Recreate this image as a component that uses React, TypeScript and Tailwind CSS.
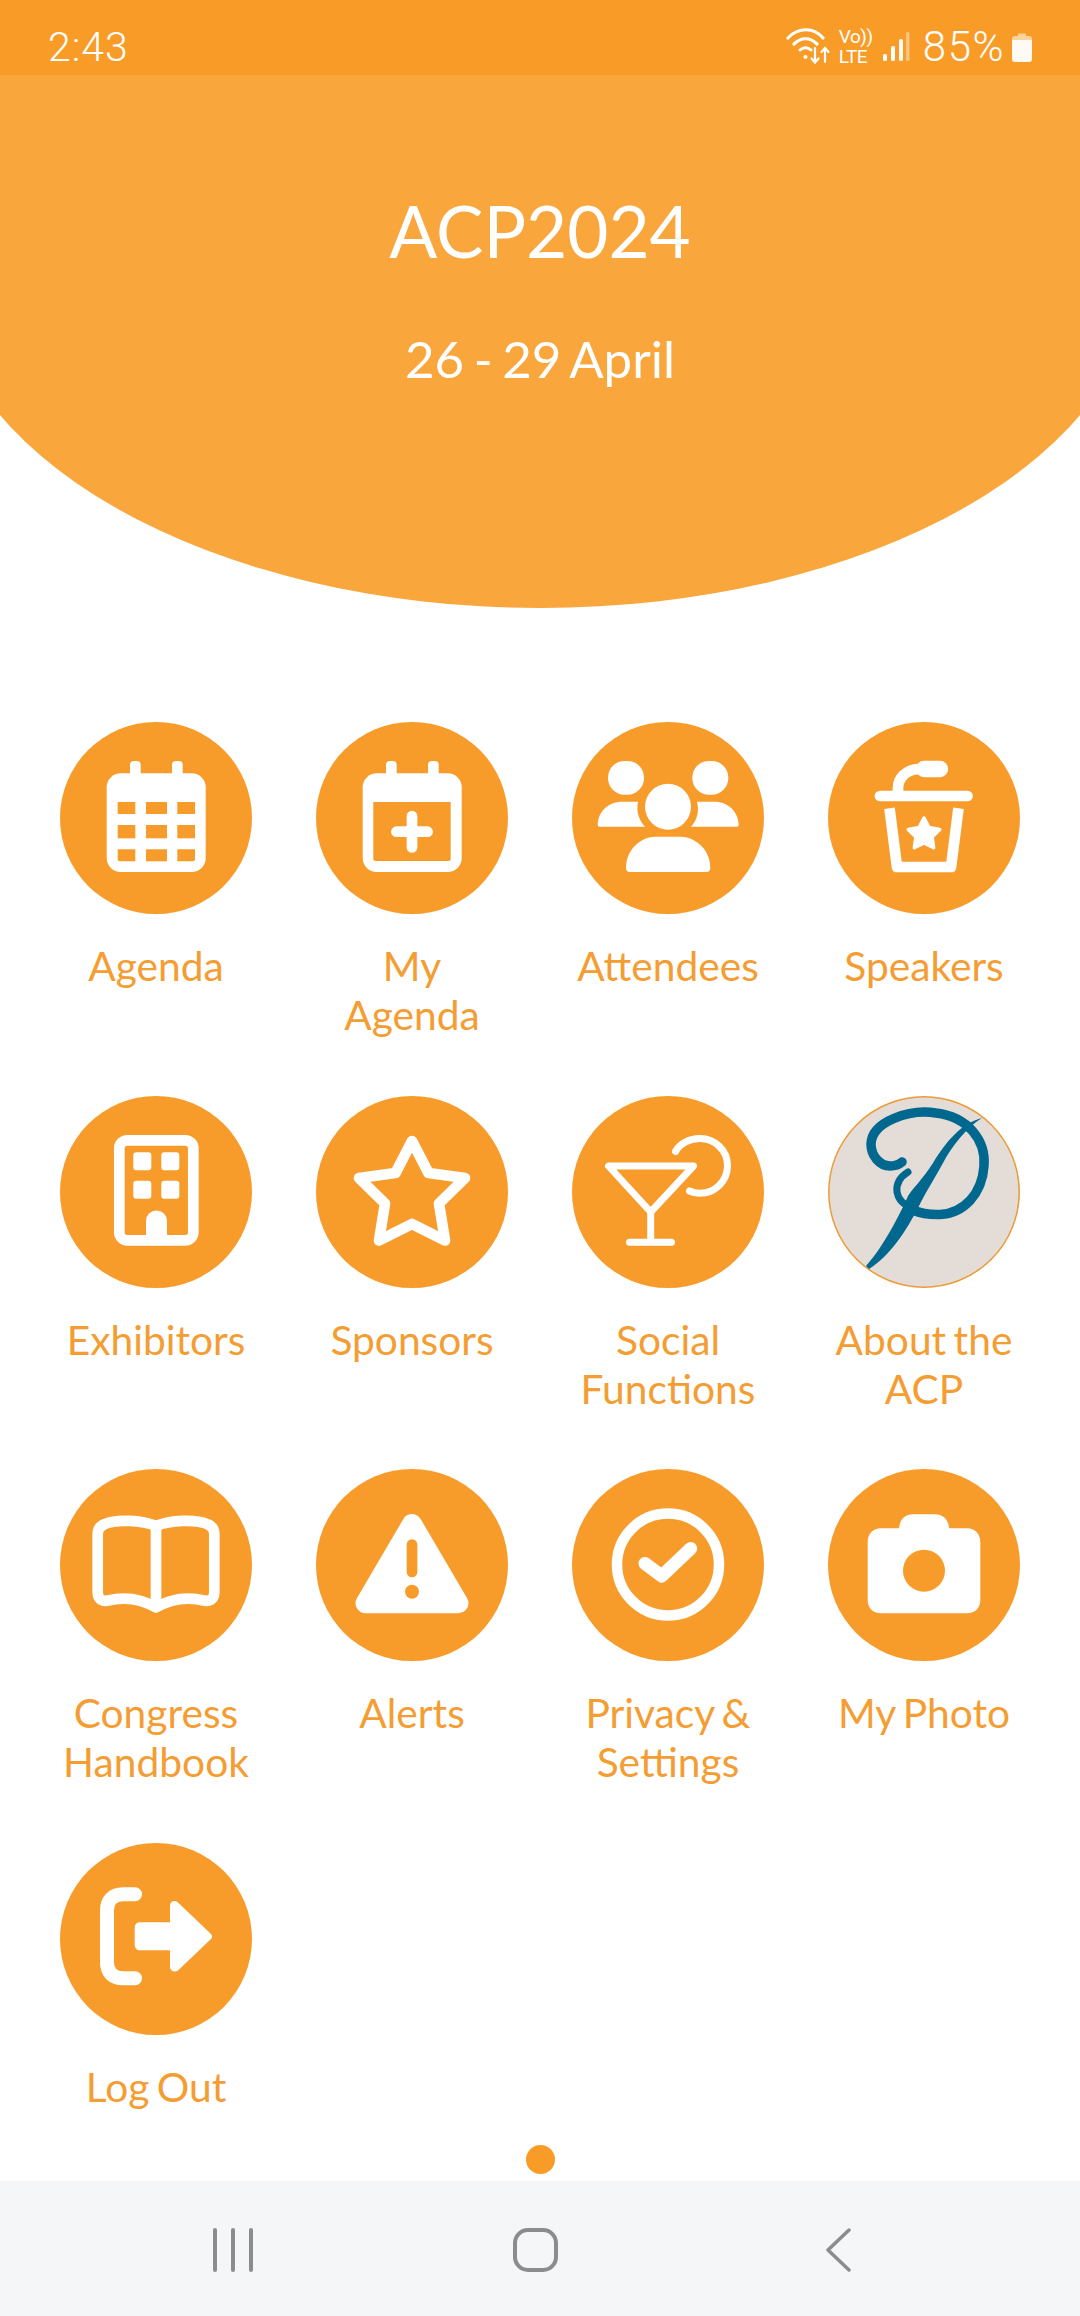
const O = "#f79c2b";

function Calendar({ plus }: { plus?: boolean }) {
  return (
    <svg viewBox="0 0 192 192" className="w-full h-full">
      <rect x="70" y="39" width="10.7" height="30" rx="4" fill="#fff" />
      <rect x="112" y="39" width="10.7" height="30" rx="4" fill="#fff" />
      <rect x="46.7" y="51.3" width="99" height="98.7" rx="14" fill="#fff" />
      {plus ? (
        <>
          <path d="M57.3 80H134.7V137a2 2 0 0 1-2 2H59.3a2 2 0 0 1-2-2Z" fill={O} />
          <path d="M80.4 109.7H111.6M96 94V125.4" stroke="#fff" strokeWidth="10.7" strokeLinecap="round" />
        </>
      ) : (
        <g fill={O}>
          <rect x="57.7" y="80" width="17.6" height="12" />
          <rect x="86" y="80" width="21" height="12" />
          <rect x="117.3" y="80" width="17.7" height="12" />
          <rect x="57.7" y="103" width="17.6" height="13.3" />
          <rect x="86" y="103" width="21" height="13.3" />
          <rect x="117.3" y="103" width="17.7" height="13.3" />
          <path d="M57.7 127.3H75.3V139.3H59.7a2 2 0 0 1-2-2Z" />
          <rect x="86" y="127.3" width="21" height="12" />
          <path d="M117.3 127.3H135V137.3a2 2 0 0 1-2 2H117.3Z" />
        </g>
      )}
    </svg>
  );
}

function Attendees() {
  return (
    <svg viewBox="0 0 192 192" className="w-full h-full">
      <g fill="#fff">
        <rect x="36" y="39" width="36" height="33.7" rx="16.5" />
        <rect x="120.3" y="39" width="36" height="33.7" rx="16.5" />
        <path d="M27.7 104.7a2 2 0 0 1-2-2C26 90 36 79.7 50 79.7H66C64 90 67 98 73 104.7Z" />
        <path d="M164.7 104.7a2 2 0 0 0 2-2C166.4 90 156.4 79.7 142.4 79.7H125C127.5 90 125 98 119 104.7Z" />
        <circle cx="96" cy="84.7" r="23" />
        <path d="M58 150a4 4 0 0 1-4-4C54 128 68 114.7 84 114.7H108C124 114.7 138.3 128 138.3 146a4 4 0 0 1-4 4Z" />
      </g>
    </svg>
  );
}

function starPoints(cx: number, cy: number, R: number, r: number) {
  const p: string[] = [];
  for (let i = 0; i < 10; i++) {
    const a = (-90 + i * 36) * (Math.PI / 180);
    const rad = i % 2 === 0 ? R : r;
    p.push(`${(cx + rad * Math.cos(a)).toFixed(1)},${(cy + rad * Math.sin(a)).toFixed(1)}`);
  }
  return p.join(" ");
}

function Speakers() {
  return (
    <svg viewBox="0 0 192 192" className="w-full h-full">
      <path d="M52 74H139.5" stroke="#fff" strokeWidth="10.7" strokeLinecap="round" />
      <path d="M70 70V66C70 56 78 48 90 47" stroke="#fff" strokeWidth="10.7" fill="none" />
      <path d="M96 47H112" stroke="#fff" strokeWidth="16.3" strokeLinecap="round" />
      <path d="M61.5 86.3L69 145H123L130.5 86.3" stroke="#fff" strokeWidth="10.7" fill="none" strokeLinejoin="round" />
      <polygon points={starPoints(96, 112.5, 16.5, 8.5)} fill="#fff" stroke="#fff" strokeWidth="3.5" strokeLinejoin="round" />
    </svg>
  );
}

function Building() {
  return (
    <svg viewBox="0 0 192 192" className="w-full h-full">
      <rect x="59.3" y="44.3" width="74" height="100" rx="8" fill="none" stroke="#fff" strokeWidth="10.7" />
      <g fill="#fff">
        <rect x="73.3" y="56.3" width="18" height="18" rx="3" />
        <rect x="101.3" y="56.3" width="18" height="18" rx="3" />
        <rect x="73.3" y="84.7" width="18" height="18" rx="3" />
        <rect x="101.3" y="84.7" width="18" height="18" rx="3" />
        <path d="M86 145V125a10.5 10.5 0 0 1 21 0V145Z" />
      </g>
    </svg>
  );
}

function StarOutline() {
  return (
    <svg viewBox="0 0 192 192" className="w-full h-full">
      <path
        d="M96 45L112.5 77L149 82L123 107.5L129 144.5L96 128L63 144.5L69 107.5L43 82L79.5 77Z"
        fill="none"
        stroke="#fff"
        strokeWidth="10.7"
        strokeLinejoin="round"
      />
    </svg>
  );
}

function Cocktail() {
  return (
    <svg viewBox="0 0 192 192" className="w-full h-full">
      <g fill="none" stroke="#fff" strokeWidth="7" strokeLinecap="round" strokeLinejoin="round">
        <path d="M36.5 70H121.5L78.7 116Z" />
        <path d="M78.7 116V146M57.5 146.3H99.5" />
        <path d="M103.5 55.5C108 47 118 42.5 128 42.5C143 42.5 155.5 54.5 155.5 69.5C155.5 85 143 97.3 128 97.3C124 97.3 120.5 96.5 117.5 95" />
      </g>
    </svg>
  );
}

function PLogo() {
  return (
    <svg viewBox="0 0 192 192" className="w-full h-full">
      <circle cx="96" cy="96" r="95.2" fill="#e3dcd7" stroke="#ee9a35" strokeWidth="1.5" />
      <g fill="none" stroke="#00688f" strokeLinecap="round">
        <path
          d="M74 66C70 69.5 66 70 62 70C52 70 43 60 43 48C44 25 82 13 108 17C140 21 158 44 156 70C154 98 136 117 112 118.5C100 119 92 117 84 114"
          strokeWidth="9.5"
        />
        <path d="M80 76C72 81 68 88 69 96C70 101 73 106 78 109" strokeWidth="7" />
      </g>
      <path
        d="M154 22C132 28 118 46 105 67C94 84 85 92 80 100C72 118 56 150 38 170L41 173C62 160 78 135 90 112C100 92 108 80 115 67C124 50 138 32 154 22Z"
        fill="#00688f"
      />
    </svg>
  );
}

function Book() {
  return (
    <svg viewBox="0 0 192 192" className="w-full h-full">
      <path
        d="M96 57C82 51 56 50 45 55C40 57 37.7 60 37.7 65V123C37.7 129 41 132.5 47 131.7C62 128 80 129 96 138.5C112 129 130 128 145 131.7C151 132.5 154.3 129 154.3 123V65C154.3 60 152 57 147 55C136 50 110 51 96 57Z"
        fill="none"
        stroke="#fff"
        strokeWidth="10.7"
        strokeLinejoin="round"
      />
      <path d="M96 57V138" stroke="#fff" strokeWidth="10.7" />
    </svg>
  );
}

function Alert() {
  return (
    <svg viewBox="0 0 192 192" className="w-full h-full">
      <path d="M96 55L49.5 134.3H142.5Z" fill="#fff" stroke="#fff" strokeWidth="20" strokeLinejoin="round" />
      <path d="M96 75.6V103" stroke={O} strokeWidth="10.7" strokeLinecap="round" />
      <circle cx="96" cy="122.7" r="7" fill={O} />
    </svg>
  );
}

function Privacy() {
  return (
    <svg viewBox="0 0 192 192" className="w-full h-full">
      <circle cx="96" cy="95.5" r="51" fill="none" stroke="#fff" strokeWidth="10.5" />
      <path d="M73 94.5L89.7 107L118.7 79.5" fill="none" stroke="#fff" strokeWidth="13" strokeLinecap="round" strokeLinejoin="round" />
    </svg>
  );
}

function Camera() {
  return (
    <svg viewBox="0 0 192 192" className="w-full h-full">
      <path
        d="M53 59.3H71C72 50 77 45.3 85 45.3H107C115 45.3 120 50 121.3 59.3H139C147 59.3 152.3 65 152.3 73V131C152.3 139 147 144.3 139 144.3H53C45 144.3 39.7 139 39.7 131V73C39.7 65 45 59.3 53 59.3Z"
        fill="#fff"
      />
      <circle cx="96" cy="101.7" r="21" fill={O} />
    </svg>
  );
}

function LogOut() {
  return (
    <svg viewBox="0 0 192 192" className="w-full h-full">
      <path d="M75 51.3H63C53 51.3 47 57 47 67V119.5C47 129.5 53 135.3 63 135.3H75" fill="none" stroke="#fff" strokeWidth="14" strokeLinecap="round" />
      <path
        d="M80 79.3H110V63C110 58 115 56.5 118.5 60L151 91C152.5 92.5 152.5 94.5 151 96L118.5 127C115 130 110 128.5 110 123.5V107.3H80C77 107.3 74.7 105 74.7 102V84.5C74.7 81.5 77 79.3 80 79.3Z"
        fill="#fff"
      />
    </svg>
  );
}

const items: { lines: string[]; icon: React.ReactNode; logo?: boolean }[] = [
  { lines: ["Agenda"], icon: <Calendar /> },
  { lines: ["My", "Agenda"], icon: <Calendar plus /> },
  { lines: ["Attendees"], icon: <Attendees /> },
  { lines: ["Speakers"], icon: <Speakers /> },
  { lines: ["Exhibitors"], icon: <Building /> },
  { lines: ["Sponsors"], icon: <StarOutline /> },
  { lines: ["Social", "Functions"], icon: <Cocktail /> },
  { lines: ["About the", "ACP"], icon: <PLogo />, logo: true },
  { lines: ["Congress", "Handbook"], icon: <Book /> },
  { lines: ["Alerts"], icon: <Alert /> },
  { lines: ["Privacy &", "Settings"], icon: <Privacy /> },
  { lines: ["My Photo"], icon: <Camera /> },
  { lines: ["Log Out"], icon: <LogOut /> },
];

function StatusIcons() {
  return (
    <div className="flex items-center">
      <svg width="46" height="42" viewBox="0 0 46 42" fill="none" stroke="#fff" strokeLinecap="round">
        <path d="M2 12C12 1 28 1 37 12" strokeWidth="3.2" />
        <path d="M8 18C15 11 24 11 31 18" strokeWidth="3.2" />
        <path d="M14 24C17 21 22 21 25 24" strokeWidth="3" />
        <circle cx="19.5" cy="31" r="2" fill="#fff" stroke="none" />
        <path d="M29 22V36M25.5 32.5L29 36.5L32.5 32.5" strokeWidth="2.2" />
        <path d="M39 36V22M35.5 26L39 22L42.5 26" strokeWidth="2.2" />
      </svg>
      <div className="ml-[7px] w-[32px] flex flex-col text-white text-[19px] leading-[20px] tracking-[-0.5px] font-['Roboto',sans-serif]">
        <span>Vo))</span>
        <span>LTE</span>
      </div>
      <svg width="28" height="32" viewBox="0 0 28 32" className="ml-[11px]" fill="#fff">
        <rect x="1" y="23" width="4" height="7" rx="1.5" />
        <rect x="9" y="15" width="4" height="15" rx="1.5" />
        <rect x="17" y="8" width="4" height="22" rx="1.5" opacity="0.95" />
        <rect x="24" y="1" width="3.5" height="29" rx="1.5" opacity="0.4" />
      </svg>
    </div>
  );
}

export default function App() {
  return (
    <div className="w-[1080px] h-[2316px] bg-white overflow-hidden flex flex-col font-['Lato',sans-serif]">
      <div className="h-[75px] shrink-0 bg-[#f99c27] flex items-center justify-between pt-[19px] pl-[48px] pr-[48px]">
        <span className="text-white text-[41px] leading-[48px] font-light font-['Roboto',sans-serif] tracking-[1px]">2:43</span>
        <div className="flex items-center">
          <StatusIcons />
          <span className="ml-[13px] text-white text-[42px] leading-[48px] font-light font-['Roboto',sans-serif] tracking-[1.5px]">85%</span>
          <svg width="20" height="30" viewBox="0 0 20 30" className="ml-[7px]">
            <path d="M6 4V2.5a1 1 0 0 1 1-1h6a1 1 0 0 1 1 1V4h3a3 3 0 0 1 3 3v1H0V7a3 3 0 0 1 3-3Z" fill="#fff" opacity="0.55" />
            <path d="M0 8H20V27a3 3 0 0 1-3 3H3a3 3 0 0 1-3-3Z" fill="#fff" opacity="0.95" />
          </svg>
        </div>
      </div>

      <div className="h-[533px] shrink-0 mx-[-60px] bg-[#f9a63d] [border-radius:0_0_50%_50%/0_0_342px_342px] flex flex-col items-center text-white">
        <div className="text-[71px] leading-[86px] mt-[113px]">ACP2024</div>
        <div className="text-[51px] leading-[60px] mt-[55px] [word-spacing:-3.5px]">26 - 29 April</div>
      </div>

      <div className="h-[1537px] shrink-0 grid grid-cols-4 grid-rows-[373.67px_373.67px_373.67px_auto] px-[28px] pt-[114px]">
        {items.map((it) => (
          <div key={it.lines.join(" ")} className="flex flex-col items-center">
            <div className={`w-[192px] h-[192px] rounded-full shrink-0 ${it.logo ? "" : "bg-[#f79c2b]"}`}>{it.icon}</div>
            <div className="mt-[27px] text-[40.7px] leading-[49px] text-center text-[#f49d33] [word-spacing:-3px]">
              {it.lines.map((l) => (
                <div key={l}>{l}</div>
              ))}
            </div>
          </div>
        ))}
      </div>

      <div className="flex justify-center">
        <div className="w-[29px] h-[29px] rounded-full bg-[#f99c27]" />
      </div>
      <div className="mt-[7px] flex-1 min-h-0 bg-[#f5f6f8] flex items-center pt-[3px]">
        <svg width="1080" height="44" viewBox="0 0 1080 44" fill="none" stroke="#8c8c8c" strokeLinecap="round">
          <path d="M215 2V42M233 2V42M251 2V42" strokeWidth="4" />
          <rect x="515" y="2" width="41" height="40" rx="13" strokeWidth="4" />
          <path d="M849 2L828 22L849 42" strokeWidth="3.5" strokeLinejoin="round" />
        </svg>
      </div>
    </div>
  );
}
